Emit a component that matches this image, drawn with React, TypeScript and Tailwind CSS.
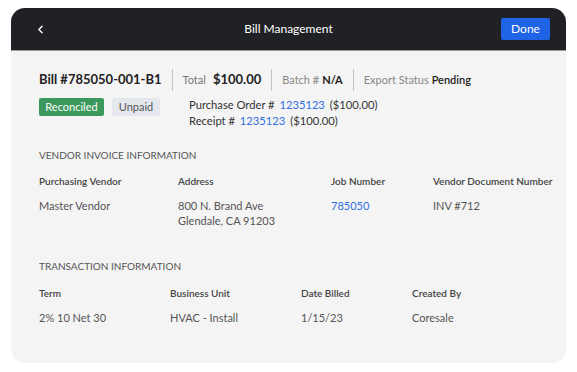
import React from 'react';
import { ChevronLeft } from 'lucide-react';

const font = { fontFamily: 'Lato, "Open Sans", sans-serif' };

const vendorCols = [
  { label: 'Purchasing Vendor', value: ['Master Vendor'] },
  { label: 'Address', value: ['800 N. Brand Ave', 'Glendale, CA 91203'] },
  { label: 'Job Number', value: ['785050'], link: true },
  { label: 'Vendor Document Number', value: ['INV #712'] },
];

const txCols = [
  { label: 'Term', value: '2% 10 Net 30' },
  { label: 'Business Unit', value: 'HVAC - Install' },
  { label: 'Date Billed', value: '1/15/23' },
  { label: 'Created By', value: 'Coresale' },
];

const App: React.FC = () => {
  return (
    <div className="w-[577px] h-[372px] bg-white pt-[8px] pl-[11px]" style={font}>
      <div className="w-[555px] h-[355px] rounded-[14px] overflow-hidden bg-[#f4f4f4] flex flex-col">
        {/* Header */}
        <header className="h-[43px] bg-[#202124] border-b border-[#9a9a9a] flex items-center px-[23px] relative">
          <ChevronLeft className="w-[13px] h-[13px] text-white" strokeWidth={2.5} />
          <span className="absolute left-0 right-0 text-center text-white text-[12px] pointer-events-none">
            Bill Management
          </span>
          <button className="ml-auto mr-[-7px] w-[49px] h-[22px] bg-[#1f63e6] text-white text-[12px] rounded-[2px]">
            Done
          </button>
        </header>

        <div className="flex-1 pl-[28px] pr-[10px] pt-[18px]">
          {/* Bill summary */}
          <div className="flex items-center h-[22px]">
            <span className="text-[13px] font-bold text-[#222]">Bill #785050-001-B1</span>
            <div className="w-px h-[22px] bg-[#c4c4c4] mx-[10px]" />
            <span className="text-[11px] text-[#777]">Total</span>
            <span className="text-[13px] font-bold text-[#222] ml-[7px]">$100.00</span>
            <div className="w-px h-[22px] bg-[#c4c4c4] mx-[10px]" />
            <span className="text-[11px] text-[#888]">Batch #</span>
            <span className="text-[11px] font-bold text-[#222] ml-[3px]">N/A</span>
            <div className="w-px h-[22px] bg-[#c4c4c4] mx-[10px]" />
            <span className="text-[11px] text-[#888]">Export Status</span>
            <span className="text-[11px] font-semibold text-[#222] ml-[3px]">Pending</span>
          </div>

          <div className="flex items-start mt-[7px]">
            <span className="w-[65px] h-[18px] rounded-[2px] bg-[#3a985c] text-white text-[11px] flex items-center justify-center">
              Reconciled
            </span>
            <span className="w-[48px] h-[18px] rounded-[2px] bg-[#e4e8ed] text-[#555] text-[11px] flex items-center justify-center ml-[8px]">
              Unpaid
            </span>
            <div className="ml-[29px] text-[11.2px] text-[#333] leading-[16px] mt-[-1px]">
              <div>
                Purchase Order # <span className="text-[#2f6fe4] ml-[2px]">1235123</span>
                <span className="ml-[5px]">($100.00)</span>
              </div>
              <div>
                Receipt # <span className="text-[#2f6fe4] ml-[2px]">1235123</span>
                <span className="ml-[5px]">($100.00)</span>
              </div>
            </div>
          </div>

          {/* Vendor invoice information */}
          <div className="mt-[19px] text-[10px] text-[#555] uppercase">
            Vendor Invoice Information
          </div>
          <div className="grid grid-cols-[139px_153px_102px_1fr] mt-[11px]">
            {vendorCols.map((c) => (
              <div key={c.label}>
                <div className="text-[10px] font-semibold text-[#444] whitespace-nowrap">{c.label}</div>
                <div className={`mt-[9px] text-[11px] leading-[15px] ${c.link ? 'text-[#2f6fe4]' : 'text-[#555]'}`}>
                  {c.value.map((v) => (
                    <div key={v}>{v}</div>
                  ))}
                </div>
              </div>
            ))}
          </div>

          {/* Transaction information */}
          <div className="mt-[31px] text-[10px] text-[#555] uppercase">
            Transaction Information
          </div>
          <div className="grid grid-cols-[131px_131px_111px_1fr] mt-[12px]">
            {txCols.map((c) => (
              <div key={c.label}>
                <div className="text-[10px] font-semibold text-[#444]">{c.label}</div>
                <div className="mt-[9px] text-[11px] leading-[15px] text-[#555]">{c.value}</div>
              </div>
            ))}
          </div>
        </div>
      </div>
    </div>
  );
};

export default App;
